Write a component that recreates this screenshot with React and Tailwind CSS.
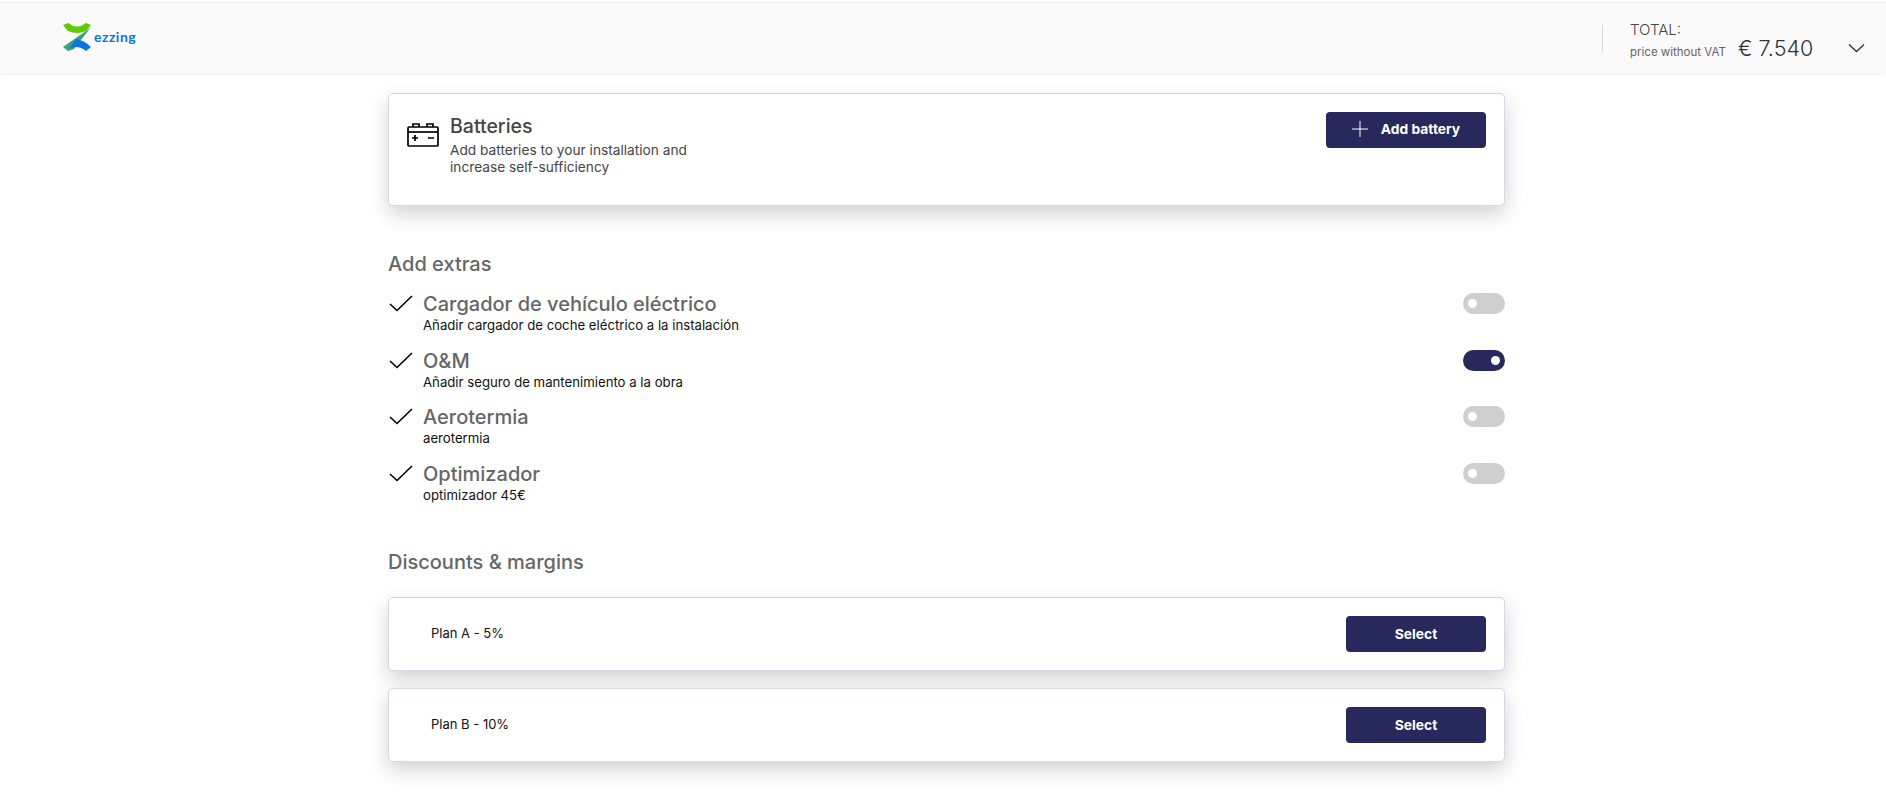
import React from "react";

const font = "font-['Inter','Liberation_Sans',sans-serif]";

function Logo() {
  return (
    <div className="flex items-center">
      <svg width="32" height="32" viewBox="0 0 32 32" className="block">
        <path d="M1 3 L6 1 Q15 8 24 1 L29 3 L24 9 Q15 13 6 9 Z" fill="#5fcb00" />
        <path d="M24 9 L29 5 L12 27 L6 29 L1 25 Z" fill="#38a078" />
        <path d="M14 17 Q22 18 29 25 L24 29 Q17 23 8 26 Z" fill="#0b74e5" />
      </svg>
      <span className="text-[14px] leading-none font-bold text-[#0b74de] mt-[-3px] font-['Lato',sans-serif] tracking-[0.5px]">ezzing</span>
    </div>
  );
}

function Header() {
  return (
    <header className="mt-[2px] h-[71px] bg-[#fafafa] border-t border-[#f0f0f0] shadow-[0_1px_3px_rgba(0,0,0,0.08)] flex items-center justify-between pl-[62px] pr-[21px]">
      <Logo />
      <div className="flex items-center">
        <div className="w-px h-[27px] bg-[#d6d6d6] mr-[27px]" />
        <div className="flex flex-col mt-[10px]">
          <span className="text-[15px] leading-[18px] font-light text-[#444]">TOTAL:</span>
          <div className="flex items-center">
            <span className="text-[11.5px] leading-[26px] text-[#666] w-[108px]">price without VAT</span>
            <span className="text-[21.5px] leading-[26px] font-light text-[#333] w-[110px] mt-[-8px]">€ 7.540</span>
          </div>
        </div>
        <svg width="17" height="10" viewBox="0 0 17 10" fill="none" stroke="#333" strokeWidth="1.3" className="mt-[20px]">
          <path d="M1 1.5 L8.5 8.5 L16 1.5" />
        </svg>
      </div>
    </header>
  );
}

function Card({ className, children }) {
  return (
    <div className={`bg-white border border-[#d3d8e8] rounded-[5px] shadow-[0_8px_20px_rgba(0,0,0,0.18)] ${className}`}>
      {children}
    </div>
  );
}

function Button({ className, children }) {
  return (
    <button className={`h-[36px] bg-[#27285c] rounded-[4px] text-white text-[13.8px] font-bold flex items-center justify-center ${className}`}>
      {children}
    </button>
  );
}

function BatteryIcon() {
  return (
    <svg width="32" height="25" viewBox="0 0 32 25" fill="none" stroke="#000" strokeWidth="1.7" className="mt-[10px]">
      <rect x="1" y="5" width="30" height="19" rx="1" />
      <path d="M1 10 H31" />
      <path d="M6 5 V2 H12 V5 M20 5 V2 H26 V5" />
      <path d="M5 16 H11 M8 13 V19 M21 16 H27" />
    </svg>
  );
}

function Toggle({ on }) {
  return (
    <div className={`w-[42px] h-[21px] mt-[1px] rounded-full flex items-center px-[5px] ${on ? "bg-[#27285c] justify-end" : "bg-[#cfcfcf]"}`}>
      <div className="w-[9px] h-[9px] rounded-full bg-white" />
    </div>
  );
}

function Extra({ title, desc, on }) {
  return (
    <div className="h-[56.5px] flex items-start">
      <svg width="24" height="17" viewBox="0 0 24 17" fill="none" stroke="#000" strokeWidth="1.6" className="ml-[1px] mt-[3px]">
        <path d="M1 9 L8 15.5 L23 1" />
      </svg>
      <div className="ml-[10px] flex-1 min-w-0">
        <div className="text-[20px] leading-[24px] font-medium text-[#666]">{title}</div>
        <div className="text-[13.2px] leading-[18px] text-[#111]">{desc}</div>
      </div>
      <Toggle on={on} />
    </div>
  );
}

function Plan({ name }) {
  return (
    <Card className="h-[74px] flex items-center justify-between pl-[42px] pr-[18px]">
      <span className="text-[13px] text-[#111]">{name}</span>
      <Button className="w-[140px]">Select</Button>
    </Card>
  );
}

export default function App() {
  return (
    <div className={`min-h-screen bg-white ${font}`}>
      <Header />
      <main className="w-[1117px] ml-[388px] pt-[20px]">
        <Card className="h-[113px] flex justify-between pl-[18px] pr-[18px] pt-[18px]">
          <div className="flex">
            <BatteryIcon />
            <div className="ml-[11px] mt-[2px]">
              <div className="text-[19.5px] leading-[24px] font-medium text-[#444]">Batteries</div>
              <div className="text-[13.7px] leading-[17px] text-[#444] w-[260px] mt-[4px]">Add batteries to your installation and increase self-sufficiency</div>
            </div>
          </div>
          <Button className="w-[160px] gap-[13px] pb-[2px]">
            <svg width="16" height="16" viewBox="0 0 16 16" stroke="#fff" strokeWidth="1">
              <path d="M8 0 V16 M0 8 H16" />
            </svg>
            Add battery
          </Button>
        </Card>

        <h2 className="mt-[46px] text-[20px] leading-[24px] font-medium text-[#666]">Add extras</h2>
        <div className="mt-[16px]">
          <Extra title="Cargador de vehículo eléctrico" desc="Añadir cargador de coche eléctrico a la instalación" />
          <Extra title="O&M" desc="Añadir seguro de mantenimiento a la obra" on />
          <Extra title="Aerotermia" desc="aerotermia" />
          <Extra title="Optimizador" desc="optimizador 45€" />
        </div>

        <h2 className="mt-[32px] text-[20px] leading-[24px] font-medium text-[#666]">Discounts & margins</h2>
        <div className="mt-[23px] flex flex-col gap-[17px]">
          <Plan name="Plan A - 5%" />
          <Plan name="Plan B - 10%" />
        </div>
      </main>
    </div>
  );
}
